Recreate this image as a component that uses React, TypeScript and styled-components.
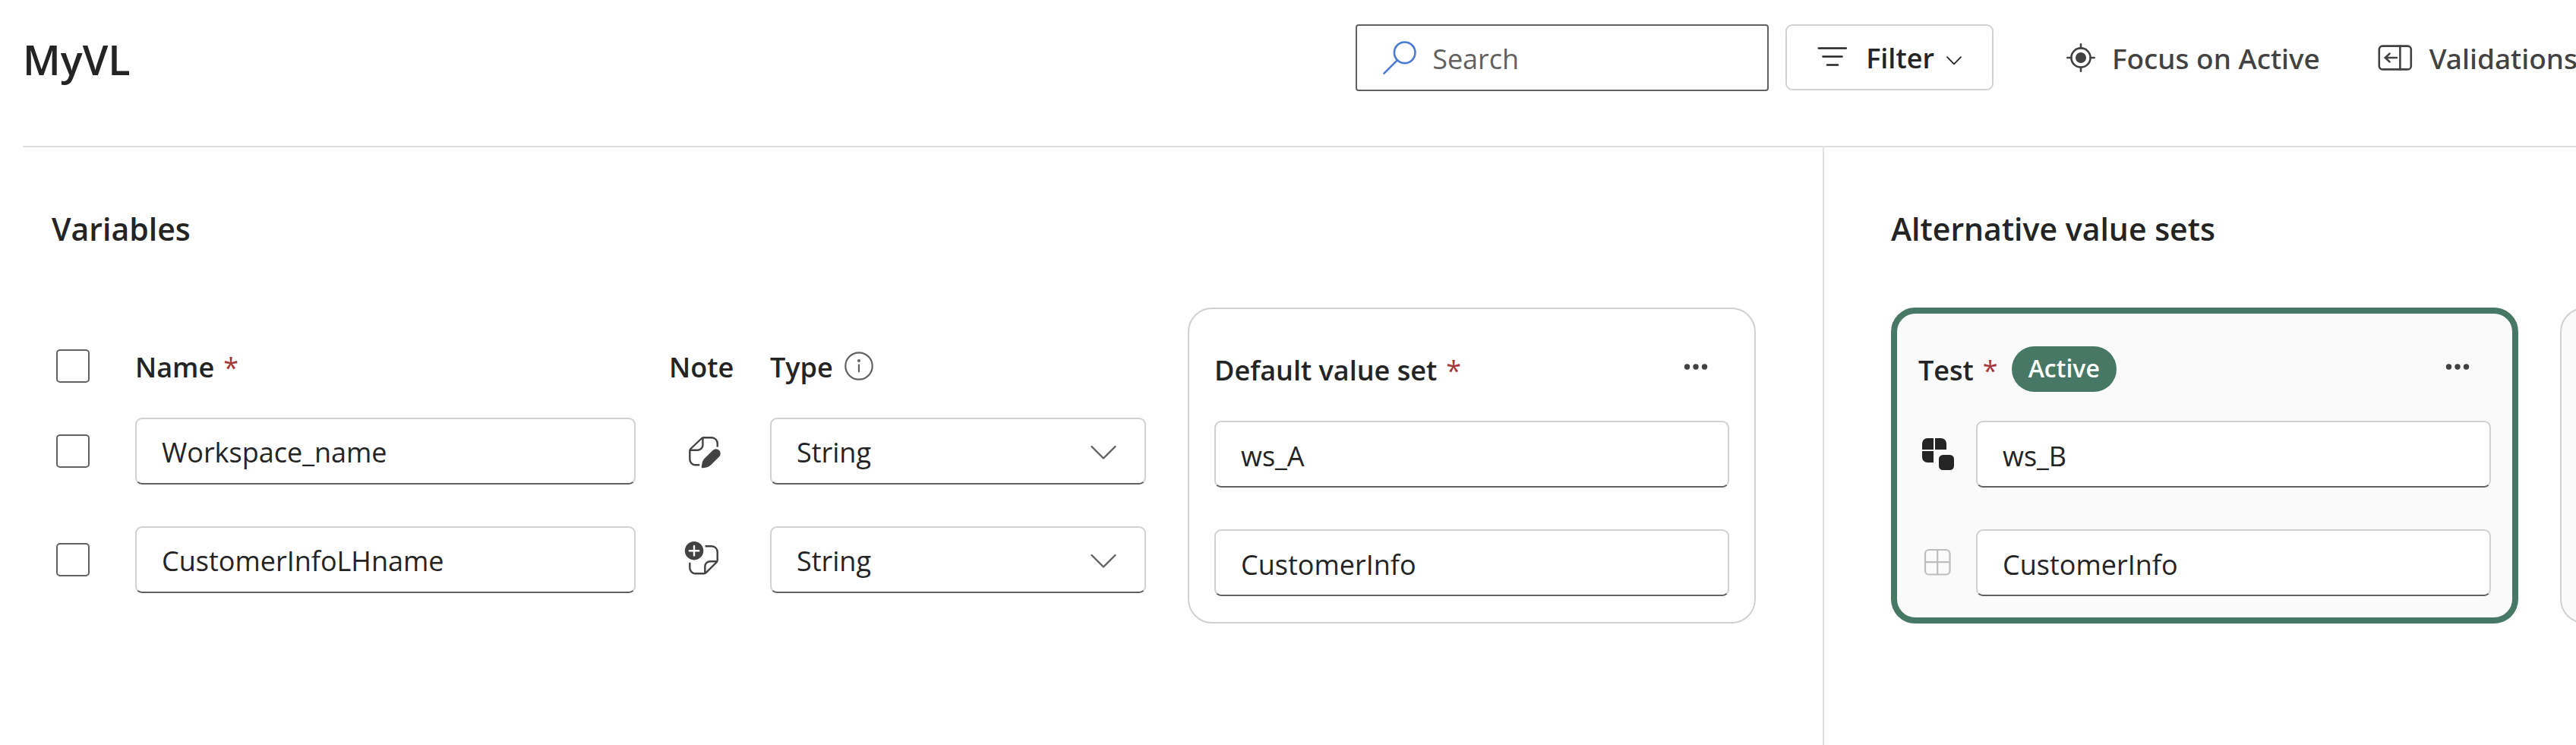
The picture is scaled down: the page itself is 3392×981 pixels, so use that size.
import React from "react";
import styled, { createGlobalStyle } from "styled-components";

const color = {
  text: "#242424",
  textSoft: "#424242",
  textHint: "#616161",
  line: "#e0e0e0",
  border: "#d1d1d1",
  borderStrong: "#616161",
  required: "#a4373a",
  green: "#477866",
  cardFill: "#fafafa",
};

const GlobalStyle = createGlobalStyle`
  *, *::before, *::after { box-sizing: border-box; }
  body {
    margin: 0;
    background: #fff;
    color: ${color.text};
    font-family: "Open Sans", "Noto Sans", sans-serif;
    font-size: 36px;
    overflow-x: hidden;
  }
  button, input, select { font: inherit; color: inherit; margin: 0; }
  svg { display: block; flex: none; }
`;

const Page = styled.div`
  min-height: 100vh;
  display: flex;
  flex-direction: column;
`;

const Header = styled.header`
  display: flex;
  align-items: flex-start;
  margin-left: 30px;
  padding: 32px 0 72px;
  border-bottom: 2px solid ${color.line};
`;

const Title = styled.h1`
  flex: 1;
  margin: 0;
  padding-top: 4px;
  font-size: 54px;
  font-weight: 600;
  line-height: 84px;
`;

const Toolbar = styled.div`
  display: flex;
  gap: 22px;
`;

const SearchBox = styled.label`
  display: flex;
  align-items: center;
  gap: 21px;
  width: 544px;
  height: 88px;
  padding: 0 34px;
  border: 2px solid ${color.borderStrong};
  border-radius: 4px;
`;

const SearchInput = styled.input`
  flex: 1;
  min-width: 0;
  height: 84px;
  padding: 2px 0 0;
  border: 0;
  outline: 0;
  background: none;
  &::placeholder {
    color: ${color.textHint};
    opacity: 1;
  }
`;

const FilterButton = styled.button`
  display: flex;
  align-items: center;
  height: 87px;
  padding: 0 40px;
  border: 2px solid ${color.border};
  border-radius: 9px;
  background: #fff;
  font-weight: 600;
`;

const FilterText = styled.span`
  padding: 2px 16px 0 24px;
`;

const Actions = styled.div`
  display: flex;
  gap: 76px;
  margin-right: -2px;
  padding-left: 74px;
`;

const ActionButton = styled.button`
  display: flex;
  align-items: center;
  gap: 22px;
  height: 88px;
  padding: 0;
  border: 0;
  background: none;
  color: ${color.textSoft};
  font-family: "Noto Sans", sans-serif;
  font-size: 37px;
  font-weight: 500;
  white-space: nowrap;
`;

const Workspace = styled.main`
  flex: 1;
  display: grid;
  grid-template-columns: minmax(0, 2402fr) minmax(0, 990fr);
`;

const Pane = styled.section<{ $divided?: boolean }>`
  padding: 77px ${(p) => (p.$divided ? "88px 0 68px" : "0 0 88px")};
  border-right: ${(p) => (p.$divided ? `2px solid ${color.line}` : "0")};
  overflow: hidden;
`;

const PaneTitle = styled.h2`
  margin: 0 0 74px;
  font-size: 41px;
  font-weight: 600;
  line-height: 60px;
  white-space: nowrap;
`;

const VariableColumns = styled.div`
  display: grid;
  grid-template-columns: minmax(0, 1441fr) minmax(0, 748fr);
  align-items: start;
  gap: 55px;
`;

const SetColumns = styled.div`
  display: grid;
  grid-auto-flow: column;
  grid-auto-columns: 826px;
  align-items: start;
  gap: 55px;
`;

const TableWrap = styled.div`
  padding-top: 37px;
`;

const Table = styled.table`
  width: 100%;
  table-layout: fixed;
  border-collapse: collapse;
  th, td {
    padding: 0;
    text-align: left;
    font-weight: inherit;
    vertical-align: middle;
  }
  th { height: 80px; }
  td { height: 143px; }
`;

const Col = styled.col<{ $w?: number }>`
  width: ${(p) => (p.$w ? `${p.$w}px` : "auto")};
`;

const NameCell = styled.div`
  padding-right: 44px;
`;

const Label = styled.span`
  display: flex;
  align-items: center;
  gap: 12px;
  padding-top: 4px;
  font-weight: 600;
  line-height: 50px;
  white-space: nowrap;
`;

const LabelWithIcon = styled.div`
  display: flex;
  align-items: center;
  gap: 15px;
`;

const Required = styled.span`
  color: ${color.required};
  font-weight: 400;
`;

const CheckBox = styled.input.attrs({ type: "checkbox" })`
  appearance: none;
  display: block;
  width: 44px;
  height: 44px;
  margin: 0 6px;
  border: 2px solid ${color.borderStrong};
  border-radius: 5px;
  background: #fff;
`;

const TextInput = styled.input.attrs({ type: "text" })`
  display: block;
  flex: 1;
  width: 100%;
  min-width: 0;
  height: 88px;
  padding: 4px 33px 0;
  border: 2px solid ${color.border};
  border-bottom-color: ${color.borderStrong};
  border-radius: 9px;
  outline: 0;
  background: #fff;
`;

const SelectWrap = styled.div`
  position: relative;
  svg {
    position: absolute;
    right: 38px;
    top: 35px;
    pointer-events: none;
  }
`;

const Select = styled.select`
  appearance: none;
  display: block;
  width: 100%;
  height: 88px;
  padding: 4px 33px 0;
  border: 2px solid ${color.border};
  border-bottom-color: ${color.borderStrong};
  border-radius: 9px;
  outline: 0;
  background: #fff;
`;

const NoteButton = styled.button`
  display: block;
  padding: 0;
  margin-left: 20px;
  border: 0;
  background: none;
  color: ${color.textSoft};
`;

const Card = styled.article<{ $kind: "default" | "active" | "idle" }>`
  min-width: 0;
  min-height: 416px;
  padding: ${(p) => (p.$kind === "active" ? "43px 28px 28px" : "49px 33px 33px")};
  border: ${(p) => (p.$kind === "active" ? `8px solid ${color.green}` : `2px solid ${color.border}`)};
  border-radius: 32px;
  background: ${(p) => (p.$kind === "default" ? "#fff" : color.cardFill)};
`;

const CardHead = styled.div`
  display: flex;
  align-items: center;
  gap: 18px;
  height: 60px;
  margin-bottom: 38px;
`;

const Badge = styled.span`
  height: 60px;
  padding: 0 22px;
  border-radius: 30px;
  background: ${color.green};
  color: #fff;
  font-size: 32px;
  font-weight: 600;
  line-height: 58px;
`;

const MoreButton = styled.button`
  align-self: flex-start;
  height: 54px;
  margin-left: auto;
  padding: 0 28px;
  border: 0;
  background: none;
  color: ${color.textSoft};
`;

const Values = styled.div`
  display: grid;
  gap: 55px;
`;

const ValueRow = styled.div`
  display: flex;
  align-items: center;
`;

const ValueMark = styled.span`
  flex: none;
  width: 76px;
  padding-left: 4px;
`;

const SearchIcon = () => (
  <svg width="44" height="44" viewBox="0 0 44 44" fill="none" stroke="#4a7bd4" strokeWidth="2.6" strokeLinecap="round" aria-hidden>
    <circle cx="28.7" cy="15.3" r="13.8" />
    <path d="M19 25.2 1.5 42.6" />
  </svg>
);

const FilterIcon = () => (
  <svg width="40" height="40" viewBox="0 0 40 40" fill="none" stroke={color.text} strokeWidth="2.6" strokeLinecap="round" aria-hidden>
    <path d="M1.8 7.5h36M7.5 18.5h25M13 29.5h14" />
  </svg>
);

const SmallChevron = () => (
  <svg width="20" height="20" viewBox="0 0 20 20" fill="none" stroke={color.text} strokeWidth="1.8" strokeLinecap="round" strokeLinejoin="round" aria-hidden>
    <path d="M1 9.2 10 18.4 19 9.2" />
  </svg>
);

const SelectChevron = () => (
  <svg width="36" height="22" viewBox="0 0 36 22" fill="none" stroke={color.borderStrong} strokeWidth="2.4" strokeLinecap="round" strokeLinejoin="round" aria-hidden>
    <path d="M2.5 3 18 18.5 33.5 3" />
  </svg>
);

const FocusIcon = () => (
  <svg width="38" height="38" viewBox="0 0 38 38" fill="none" stroke={color.textSoft} strokeWidth="2.6" strokeLinecap="round" aria-hidden>
    <circle cx="19" cy="19" r="12.6" />
    <circle cx="19" cy="19" r="7" fill={color.textSoft} stroke="none" />
    <path d="M19 1.3v5M19 31.7v5M1.3 19h5M31.7 19h5" />
  </svg>
);

const PanelIcon = () => (
  <svg width="46" height="34" viewBox="0 0 46 34" fill="none" stroke={color.textSoft} strokeWidth="2.6" strokeLinecap="round" strokeLinejoin="round" aria-hidden>
    <rect x="1.8" y="1.6" width="42" height="30.8" rx="4.5" />
    <path d="M29.4 1.6v30.8M25 17H9.5M15.6 11.6 9.8 17l5.8 5.4" />
  </svg>
);

const InfoIcon = () => (
  <svg width="38" height="38" viewBox="0 0 38 38" fill="none" stroke={color.borderStrong} strokeWidth="2.2" strokeLinecap="round" role="img" aria-label="About types">
    <circle cx="19" cy="19" r="17.7" />
    <path d="M19 17.5v8.8" />
    <circle cx="19" cy="12" r="2" fill={color.borderStrong} stroke="none" />
  </svg>
);

const NoteEditIcon = () => (
  <svg width="48" height="48" viewBox="0 0 48 48" fill="none" stroke="currentColor" strokeWidth="2.4" strokeLinejoin="round" aria-hidden>
    <path d="M43.7 18.6v-4.8a7.5 7.5 0 0 0-7.5-7.5H25.4a4 4 0 0 0-2.8 1.2L8.4 21a4 4 0 0 0-1.1 2.8v11a7.5 7.5 0 0 0 7.5 7.5h5.4" />
    <path d="M24.4 6.6v9.3a6.8 6.8 0 0 1-6.8 6.8H7.8" />
    <path
      d="M37.6 22.9 27.2 33.3c-2.2 2.2-3.2 4-3.6 6.4l-.9 4.6c-.2 1.4.8 2.2 2 2l4.4-.9c2.4-.5 4.2-1.5 6.2-3.5L45.9 31.5a5.9 5.9 0 0 0-8.3-8.6z"
      fill="currentColor"
      stroke="none"
    />
  </svg>
);

const NoteAddIcon = () => (
  <svg width="48" height="48" viewBox="0 0 48 48" fill="none" stroke="currentColor" strokeWidth="2.4" strokeLinejoin="round" aria-hidden>
    <path d="M27.6 6.3h8.6a7.5 7.5 0 0 1 7.5 7.5v10.8a4 4 0 0 1-1.2 2.8L28.6 41.2a4 4 0 0 1-2.8 1.1h-11a7.5 7.5 0 0 1-7.5-7.5v-7" />
    <path d="M43.4 26.2h-9.3a6.8 6.8 0 0 0-6.8 6.8v8.8" />
    <circle cx="13" cy="12.2" r="12.2" fill="currentColor" stroke="none" />
    <path d="M13 6v12.4M6.8 12.2h12.4" stroke="#fff" strokeLinecap="round" />
  </svg>
);

const MoreIcon = () => (
  <svg width="32" height="10" viewBox="0 0 32 10" fill="currentColor" aria-hidden>
    <circle cx="4.5" cy="5" r="3.7" />
    <circle cx="16" cy="5" r="3.7" />
    <circle cx="27.5" cy="5" r="3.7" />
  </svg>
);

const ChangedIcon = () => (
  <svg width="44" height="44" viewBox="0 0 44 44" fill={color.text} role="img" aria-label="Differs from default">
    <path d="M8 1h8v15H1V8a7 7 0 0 1 7-7z" />
    <path d="M18 1h8a7 7 0 0 1 7 7v8H18z" />
    <path d="M1 18h15v15H8a7 7 0 0 1-7-7z" />
    <rect x="23" y="23" width="20" height="20" rx="5.5" />
  </svg>
);

const SameIcon = () => (
  <svg width="44" height="44" viewBox="0 0 44 44" fill="none" stroke="#bdbdbd" strokeWidth="2.2" role="img" aria-label="Same as default">
    <rect x="5" y="5" width="32.5" height="32.5" rx="5" />
    <path d="M21.2 5v32.5M5 21.2h32.5" />
  </svg>
);

const variables = [
  { name: "Workspace_name", hasNote: true, base: "ws_A", test: "ws_B" },
  { name: "CustomerInfoLHname", hasNote: false, base: "CustomerInfo", test: "CustomerInfo" },
];

const More = ({ label }: { label: string }) => (
  <MoreButton type="button" aria-label={label}>
    <MoreIcon />
  </MoreButton>
);

export default function App() {
  return (
    <>
      <GlobalStyle />
      <Page>
        <Header>
          <Title>MyVL</Title>
          <Toolbar>
            <SearchBox>
              <SearchIcon />
              <SearchInput type="text" placeholder="Search" aria-label="Search" />
            </SearchBox>
            <FilterButton type="button">
              <FilterIcon />
              <FilterText>Filter</FilterText>
              <SmallChevron />
            </FilterButton>
            <Actions>
              <ActionButton type="button">
                <FocusIcon />
                Focus on Active
              </ActionButton>
              <ActionButton type="button">
                <PanelIcon />
                Validations
              </ActionButton>
            </Actions>
          </Toolbar>
        </Header>

        <Workspace>
          <Pane $divided>
            <PaneTitle>Variables</PaneTitle>
            <VariableColumns>
              <TableWrap>
                <Table>
                  <colgroup>
                    <Col $w={110} />
                    <Col />
                    <Col $w={133} />
                    <Col $w={495} />
                  </colgroup>
                  <thead>
                    <tr>
                      <th>
                        <CheckBox aria-label="Select all variables" />
                      </th>
                      <th>
                        <Label>
                          Name <Required>*</Required>
                        </Label>
                      </th>
                      <th>
                        <Label>Note</Label>
                      </th>
                      <th>
                        <LabelWithIcon>
                          <Label>Type</Label>
                          <InfoIcon />
                        </LabelWithIcon>
                      </th>
                    </tr>
                  </thead>
                  <tbody>
                    {variables.map((v) => (
                      <tr key={v.name}>
                        <td>
                          <CheckBox aria-label={`Select ${v.name}`} />
                        </td>
                        <td>
                          <NameCell>
                            <TextInput defaultValue={v.name} aria-label="Variable name" />
                          </NameCell>
                        </td>
                        <td>
                          <NoteButton type="button" aria-label={v.hasNote ? "Edit note" : "Add note"}>
                            {v.hasNote ? <NoteEditIcon /> : <NoteAddIcon />}
                          </NoteButton>
                        </td>
                        <td>
                          <SelectWrap>
                            <Select defaultValue="String" aria-label={`Type of ${v.name}`}>
                              <option>String</option>
                            </Select>
                            <SelectChevron />
                          </SelectWrap>
                        </td>
                      </tr>
                    ))}
                  </tbody>
                </Table>
              </TableWrap>

              <Card $kind="default">
                <CardHead>
                  <Label>
                    Default value set <Required>*</Required>
                  </Label>
                  <More label="Default value set options" />
                </CardHead>
                <Values>
                  {variables.map((v) => (
                    <TextInput key={v.name} defaultValue={v.base} aria-label={`Default value of ${v.name}`} />
                  ))}
                </Values>
              </Card>
            </VariableColumns>
          </Pane>

          <Pane>
            <PaneTitle>Alternative value sets</PaneTitle>
            <SetColumns>
              <Card $kind="active">
                <CardHead>
                  <Label>
                    Test <Required>*</Required>
                  </Label>
                  <Badge>Active</Badge>
                  <More label="Test options" />
                </CardHead>
                <Values>
                  {variables.map((v) => (
                    <ValueRow key={v.name}>
                      <ValueMark>{v.base === v.test ? <SameIcon /> : <ChangedIcon />}</ValueMark>
                      <TextInput defaultValue={v.test} aria-label={`Test value of ${v.name}`} />
                    </ValueRow>
                  ))}
                </Values>
              </Card>
              <Card $kind="idle" />
            </SetColumns>
          </Pane>
        </Workspace>
      </Page>
    </>
  );
}
